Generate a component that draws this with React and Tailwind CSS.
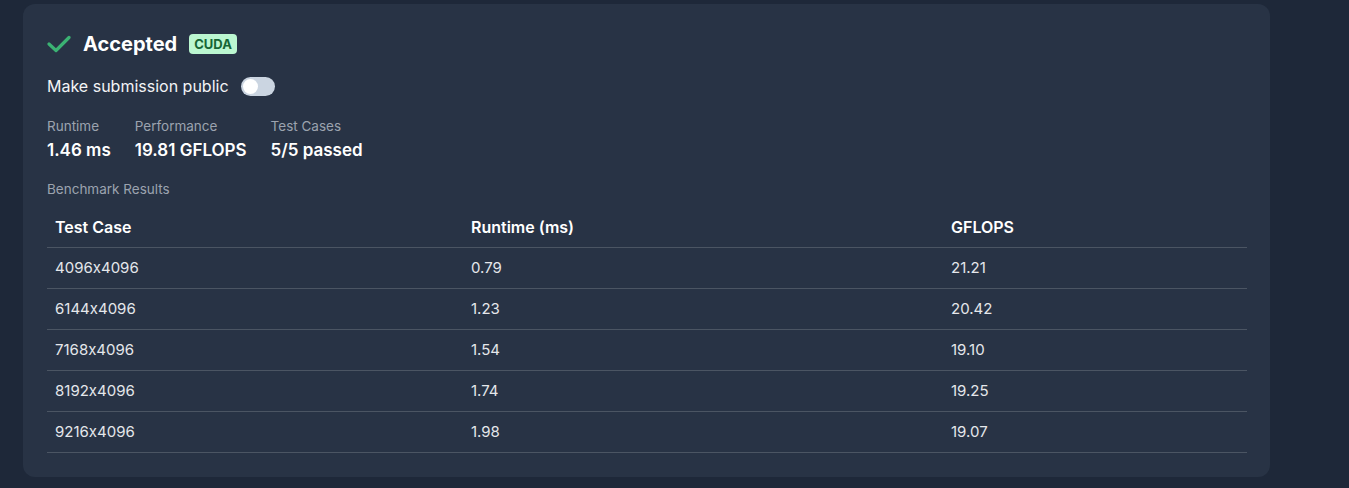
const rows = [
  { size: "4096x4096", runtime: "0.79", gflops: "21.21" },
  { size: "6144x4096", runtime: "1.23", gflops: "20.42" },
  { size: "7168x4096", runtime: "1.54", gflops: "19.10" },
  { size: "8192x4096", runtime: "1.74", gflops: "19.25" },
  { size: "9216x4096", runtime: "1.98", gflops: "19.07" },
];

const Stat = ({ label, value }) => (
  <div className="flex flex-col">
    <span className="text-[13.5px] leading-5 text-[#9ca3af]">{label}</span>
    <span className="text-[17px] leading-7 font-semibold text-white">{value}</span>
  </div>
);

export default function App() {
  return (
    <div className="min-h-[488px] bg-[#1e2839] pt-[4px] pl-[23px] font-['Inter','Noto_Sans',sans-serif] [font-feature-settings:'calt'_0]">
      <div className="w-[1247px] rounded-xl bg-[#283345] px-6 pt-[27px] pb-6">
        <div className="flex items-center h-[26px]">
          <svg width="24" height="18" viewBox="0 0 24 18" fill="none" className="text-[#3bb273]">
            <polyline
              points="2,9 9,15.5 22,2.5"
              stroke="currentColor"
              strokeWidth="3.2"
              strokeLinecap="round"
              strokeLinejoin="round"
            />
          </svg>
          <span className="ml-3 text-[20px] font-bold text-white">Accepted</span>
          <span className="ml-3 rounded-sm bg-[#bbf7d0] px-[5px] py-[1px] text-[13px] font-bold leading-[18px] text-[#166534]">
            CUDA
          </span>
        </div>

        <div className="mt-[19px] flex items-center h-5">
          <span className="text-[16px] text-[#f3f4f6]">Make submission public</span>
          <div className="ml-3 flex h-[19px] w-[34px] items-center rounded-full bg-[#cbd5e1] px-[2px]">
            <div className="h-[15px] w-[15px] rounded-full bg-white" />
          </div>
        </div>

        <div className="mt-[20px] flex gap-6">
          <Stat label="Runtime" value="1.46 ms" />
          <Stat label="Performance" value="19.81 GFLOPS" />
          <Stat label="Test Cases" value="5/5 passed" />
        </div>

        <div className="mt-[15px] text-[13.5px] leading-5 text-[#9ca3af]">Benchmark Results</div>

        <table className="mt-[9px] w-[1200px] table-fixed border-collapse text-[15px]">
          <thead>
            <tr className="border-b border-[#4b5563] h-[39px]">
              <th className="w-[416px] px-2 text-left text-[16px] font-semibold text-white">Test Case</th>
              <th className="w-[480px] px-2 text-left text-[16px] font-semibold text-white">Runtime (ms)</th>
              <th className="px-2 text-left text-[16px] font-semibold text-white">GFLOPS</th>
            </tr>
          </thead>
          <tbody>
            {rows.map((row) => (
              <tr key={row.size} className="border-b border-[#4b5563] h-[41px] text-[#e5e7eb]">
                <td className="px-2 pt-[2px]">{row.size}</td>
                <td className="px-2 pt-[2px]">{row.runtime}</td>
                <td className="px-2 pt-[2px]">{row.gflops}</td>
              </tr>
            ))}
          </tbody>
        </table>
      </div>
    </div>
  );
}
